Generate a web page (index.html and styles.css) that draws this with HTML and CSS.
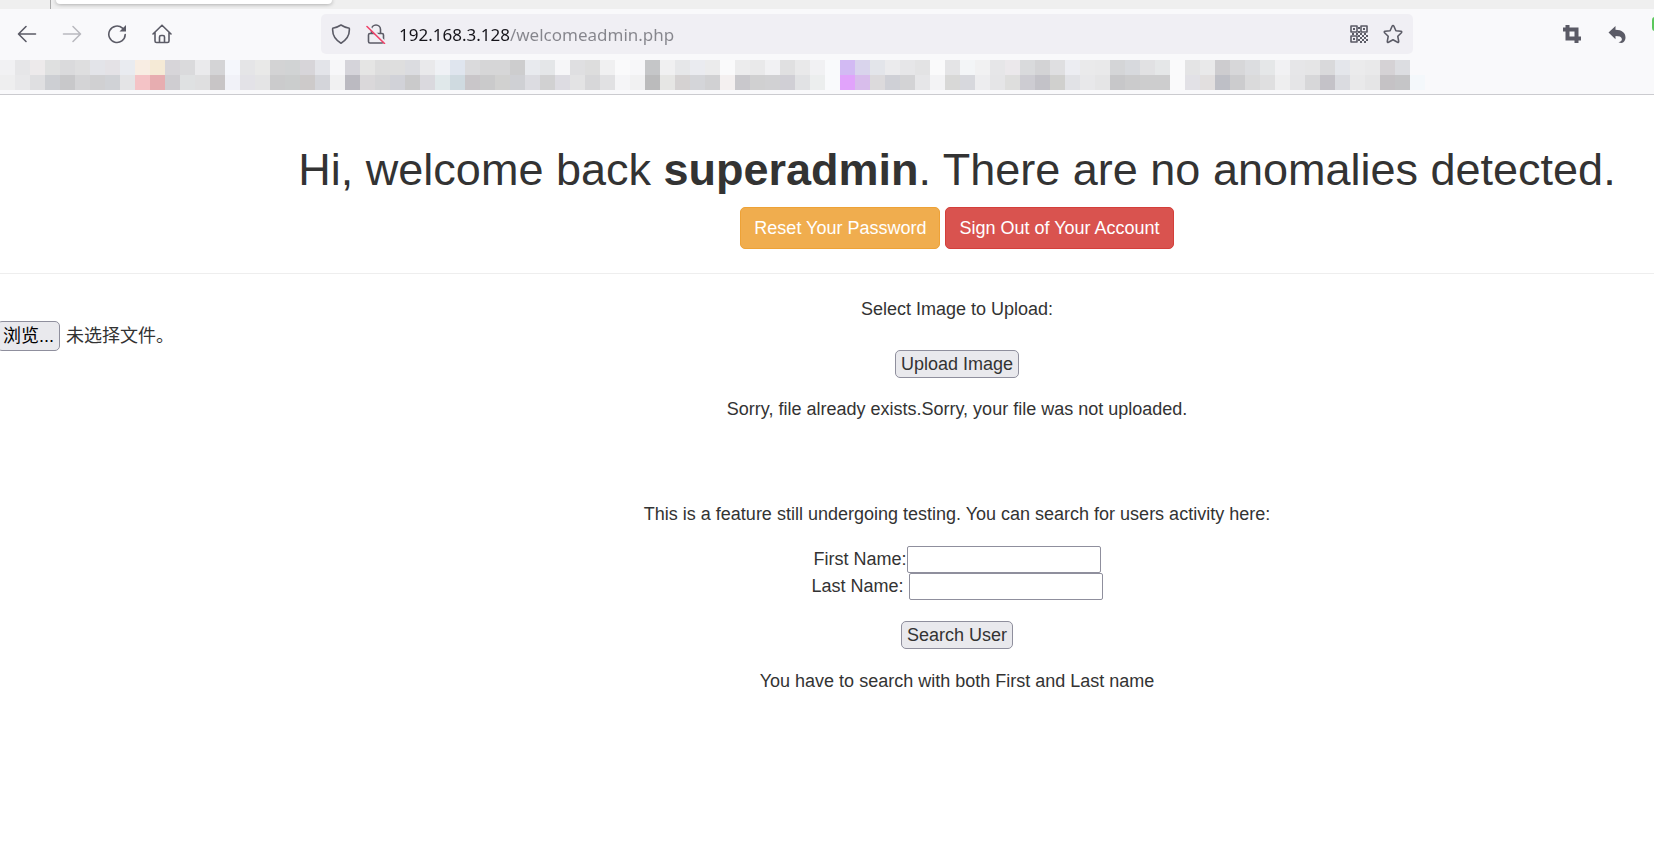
FILE: index.html
```html
<!DOCTYPE html>
<html lang="en">
<head>
<meta charset="utf-8">
<title>Welcome</title>
<link rel="stylesheet" href="styles.css">
</head>
<body>
<header class="browser">
  <div class="tabstrip"><span class="tab"></span></div>
  <div class="toolbar">
    <nav class="nav" aria-label="Browser navigation">
      <button type="button" class="tool" aria-label="Back"><svg width="20" height="20" viewBox="0 0 20 20"><path d="M18.500 10H2M9 2.500 1.500 10 9 17.500"/></svg></button>
      <button type="button" class="tool tool-off" aria-label="Forward"><svg width="20" height="20" viewBox="0 0 20 20"><path d="M1.500 10H18M11 2.500 18.500 10 11 17.500"/></svg></button>
      <button type="button" class="tool" aria-label="Reload"><svg width="20" height="20" viewBox="0 0 20 20"><path d="M15.500 4.200A8.200 8.200 0 1 0 18.200 10.500"/><path class="solid" d="M19 1v6.500h-6.500z"/></svg></button>
      <button type="button" class="tool" aria-label="Home"><svg width="20" height="20" viewBox="0 0 20 20"><path d="M1 10 10 1.200 19 10M3 8.500V17q0 1.500 1.500 1.500h11Q17 18.500 17 17V8.500M7.500 18.500V13q0-1.500 1.500-1.500h2q1.500 0 1.500 1.500v5.500"/></svg></button>
    </nav>
    <div class="urlbar">
      <svg width="20" height="20" viewBox="0 0 20 20"><path d="M10 1Q14 3.600 18.300 4.200C19 12 15.500 16 10 19.200 4.500 16 1 12 1.700 4.200Q6 3.600 10 1z"/></svg>
      <svg width="20" height="20" viewBox="0 0 20 20"><path d="M5.500 9V5.500a4.500 4.500 0 0 1 9 0V9M4 9.500h12q1.500 0 1.500 1.500v6.500q0 1.500-1.500 1.500H4q-1.500 0-1.500-1.500V11q0-1.500 1.500-1.500z"/><path class="gap" d="M2.500 2 20 19"/><path class="slash" d="M1 2.500 18.500 19.500"/></svg>
      <input class="address" type="text" aria-label="Address" value="192.168.3.128/welcomeadmin.php">
      <svg width="18" height="18" viewBox="0 0 18 18"><path d="M1 1h6v6H1zM11 1h6v6h-6zM1 11h6v6H1z"/><path class="solid" d="M3 3h2v2H3zM13 3h2v2h-2zM3 13h2v2H3zM8 2h2v2H8zM8 6h2v2H8zM2 8h2v2H2zM6 8h2v2H6zM10 8h2v2h-2zM14 8h2v2h-2zM8 10h2v2H8zM12 10h2v2h-2zM16 10h2v2h-2zM10 12h2v2h-2zM14 12h2v2h-2zM8 14h2v2H8zM12 14h2v2h-2zM16 14h2v2h-2zM10 16h2v2h-2zM14 16h2v2h-2z"/></svg>
      <svg width="20" height="20" viewBox="0 0 20 20"><path d="M10 1.500q.6 0 .9.700l2 4.500 5 .6q1.400.3.500 1.400l-3.600 3.600.9 5q.1 1.500-1.200.9L10 15.800l-4.500 2.400q-1.300.6-1.200-.9l.9-5L1.600 8.700q-.9-1.100.5-1.400l5-.6 2-4.500q.3-.7.900-.7z"/></svg>
    </div>
    <div class="extras">
      <button type="button" class="tool" aria-label="Crop"><svg width="18" height="18" viewBox="0 0 18 18"><path class="heavy" d="M4.500 0v13.500H18M0 4.500h13.500V18"/></svg></button>
      <button type="button" class="tool" aria-label="Undo"><svg width="18" height="18" viewBox="0 0 18 18"><path class="solid" d="M7.500 1v3.800C14 4.800 17.500 8 17.500 12.500c0 2-.8 3.600-2.500 5-1.200.8-2.800.5-4.500-.2 2.800-.8 3.600-2 3.300-3.600-.4-2-2.500-2.700-6.300-2.700v3.300L.5 7.500z"/></svg></button>
      <span class="extension"></span>
    </div>
  </div>
  <div class="bookmarks" id="bookmarks"></div>
</header>

<main>
  <section class="centered intro">
    <h1>Hi, welcome back <b>superadmin</b>. There are no anomalies detected.</h1>
    <p class="actions">
      <a class="btn btn-warning" href="#reset">Reset Your Password</a>
      <a class="btn btn-danger" href="#logout">Sign Out of Your Account</a>
    </p>
  </section>
  <hr>
  <form class="upload">
    <div class="centered">Select Image to Upload:</div>
    <div class="file">
      <input class="file-input" type="file" id="file">
      <label class="file-button" for="file">浏览...</label>
      <span>未选择文件。</span>
    </div>
    <div class="centered"><button type="button" class="plain">Upload Image</button></div>
  </form>
  <p class="centered message">Sorry, file already exists.Sorry, your file was not uploaded.</p>
  <form class="centered search">
    <p>This is a feature still undergoing testing. You can search for users activity here:</p>
    <div class="field"><label for="first">First Name:</label><input type="text" id="first"></div>
    <div class="field field-spaced"><label for="last">Last Name:</label><input type="text" id="last"></div>
    <button type="button" class="plain">Search User</button>
    <p>You have to search with both First and Last name</p>
  </form>
</main>
<script src="bookmarks.js"></script>
</body>
</html>
```

FILE: styles.css
```css
* { box-sizing: border-box; }

body {
  margin: 0;
  background: #fff;
  color: #333;
  font: 18px/25px "Liberation Sans", "Noto Sans CJK SC", sans-serif;
  overflow-x: hidden;
}

button, input { font: inherit; color: inherit; }
p { margin: 0; }

.browser {
  background: #f9f9fb;
  border-bottom: 1px solid #cbcbcf;
  overflow: hidden;
}

.tabstrip {
  height: 9px;
  padding-left: 50px;
  background: #efefef;
  display: flex;
  gap: 5px;
  overflow: hidden;
}
.tabstrip::before { content: ""; width: 1px; background: #aaa; }
.tab {
  width: 276px;
  height: 4px;
  background: #fff;
  border-radius: 0 0 4px 4px;
  box-shadow: 0 0 4px rgba(0, 0, 0, .4);
}

.toolbar { display: flex; align-items: center; padding: 5px 0 6px 5px; }
.nav, .extras { display: flex; align-items: center; gap: 1px; }
.tool {
  flex: none;
  width: 44px;
  height: 40px;
  padding: 0;
  border: 0;
  background: none;
  display: grid;
  place-items: center;
}
.tool-off { opacity: .4; }

svg { fill: none; stroke: #5b5b66; stroke-width: 1.6; stroke-linecap: round; stroke-linejoin: round; }
.solid { fill: #5b5b66; stroke: none; }
.heavy { stroke-width: 4; stroke-linecap: butt; stroke-linejoin: miter; }
.slash { stroke: #f0436a; }
.gap { stroke: #f0eff4; stroke-width: 2; }

.urlbar {
  flex: 1;
  height: 40px;
  margin: 0 137px;
  padding: 0 10px;
  border-radius: 5px;
  background: #f0eff4;
  display: flex;
  align-items: center;
  gap: 15px;
}
.address {
  flex: 1;
  min-width: 0;
  margin-left: -2px;
  padding: 0;
  border: 0;
  color: transparent;
  background: linear-gradient(to right, #15141a 111px, #85858c 111px);
  background-clip: text;
  font-family: "Noto Sans", sans-serif;
  font-size: 17px;
}

.extras { flex: none; width: 104px; overflow: hidden; }
.extension {
  width: 20px;
  height: 14px;
  flex: none;
  margin: 0 0 20px 12px;
  border-radius: 3px;
  background: #5bc85c;
}

.bookmarks {
  display: grid;
  grid-template-columns: repeat(95, 15px);
  grid-auto-rows: 15px;
  padding-bottom: 4px;
}

.centered { padding-left: 260px; text-align: center; }

.intro { padding-top: 50px; }
h1 {
  margin: 0;
  font-size: 45px;
  font-weight: 400;
  line-height: 50px;
}
.actions { display: flex; justify-content: center; gap: 5px; padding-top: 12px; }
.btn {
  padding: 8px 13px;
  border: 1px solid;
  border-radius: 5px;
  line-height: 24px;
  color: #fff;
  text-decoration: none;
}
.btn-warning { background: #f0ad4e; border-color: #eea236; }
.btn-danger { background: #d9534f; border-color: #d43f3a; }

hr { margin: 24px 0 23px; border: 0; border-top: 1px solid #eee; }

.file {
  display: flex;
  align-items: center;
  gap: 6px;
  margin-left: -3px;
  height: 28px;
}
.file-input { position: absolute; width: 1px; height: 1px; opacity: 0; }
.file-button {
  padding: 2px 5px;
  border: 1px solid #8f8f9d;
  border-radius: 5px;
  background: #e9e9ed;
  line-height: 24px;
  color: #000;
}

.plain {
  height: 28px;
  padding: 0 5px;
  border: 1px solid #8f8f9d;
  border-radius: 5px;
  background: #e9e9ed;
  line-height: 24px;
  vertical-align: top;
}

.message { padding-top: 19px; }
.search { padding-top: 80px; }
.search p { padding-bottom: 19px; }
.field { display: flex; justify-content: center; align-items: center; }
.field-spaced { gap: 5px; padding-bottom: 21px; }
.field input {
  width: 194px;
  height: 27px;
  padding: 0 2px;
  border: 1px solid #8f8f9d;
  border-radius: 2px;
  background: #fff;
}
.search .plain { margin-bottom: 20px; }
```

FILE: bookmarks.js
```js
const rows = [
  "f1f1f3 e6e6e8 edeaeb dfe0e0 dadadc dededf e3e4e9 e4e2e6 e9ebf0 f8ede3 f5ead6 d7d5d9 dadadc eaeaec d4d4d6 f5f7fc e5e5e7 e9e9e8 d3d3d4 d1d3d4 d7d5d9 e3e4e9 f7f7f9 d5d4da e5e5e4 dddddd dedede dbdce0 e9e9eb eff1f5 dfe5ee dadadc d6d6d7 d6d6d7 cdcdce e8eaee e4e6e8 f6f6f8 dfdfe1 dddddd f0f0f1 fafafb f7f7f9 c5c6c8 f0f0f1 e6e7e9 eaebf0 ebebec fafafb ececed e9e9ea f1f1f3 e0e0e1 e9e9ea f1f1f3 f9fafc d2baf3 d9d4ec e3e5ea ebebed e6e6e8 e3e3e4 fafafb e4e4e6 f3f5f7 f1f1f2 e6e6e8 ebe8eb d9dadc d3d3d5 dfdfe1 ecedf2 eaeaeb e9e9ea d4d5d7 d7d9dd e1e1e3 e5e7e8 fafafb e4e4e5 e9e9ea cdcccf d7d7d9 dcdde0 e5e7e8 f1f1f3 e6e6e8 e5e5e6 d9d9db e4e6eb ebebec e9e9ea d5d2d5 dcdde1 f9f9fb",
  "eeeeef e8e8ea dfdfe1 cdcfd3 c8c8ca d4d4d6 d0d0d2 d0d2d6 e4e4e6 f4c3c6 e7adb0 cfcdd1 dfe1e2 dfdfe0 c8c5c6 f1f2f8 e3e2e7 e4e4e5 cbcbcc cbcdcd cdcaca d4d5da f1f1f2 bbbac1 dad8da d5d5d7 d1d2d8 cacacb dad9de e0e8ea cfdae0 c9c6c9 cacacb d1d1d0 cfd0d4 dcdce1 d1d1d2 dddce2 e3e3e4 d7d7d9 e1e1e3 f5f5f7 f1f1f2 bbbbbc e6e6e4 d5d2d2 d4d5d9 d1d1d3 f4f0f0 c9c8cc d0d0d1 d1d1d3 d0cfd5 e1e2e4 eceeee f9fafc e1a3fb d8bdeb dcdadc cfd0d6 d3d3d5 e6e6e8 f3f3f5 d8d8d7 d7d8dd ededef e5e5e7 dededd cdccd2 c3c2c8 d0d0ce e1e2e6 e8e8ea e5e5e6 c7c7c9 cbcbcc cdcdce cdcdce fafafb e2e1e6 e2dfdf bebfc6 ccccce dadadb dfdfe0 eeeeef e5e5e7 d7d7d9 c4c2c8 dadbe0 e9e9ea e5e5e6 c5c2c5 c5c5c7 f4f8fb"
];
const bar = document.getElementById("bookmarks");
rows.join(" ").split(" ").forEach(color => {
  const cell = document.createElement("span");
  cell.style.backgroundColor = "#" + color;
  bar.append(cell);
});
```
